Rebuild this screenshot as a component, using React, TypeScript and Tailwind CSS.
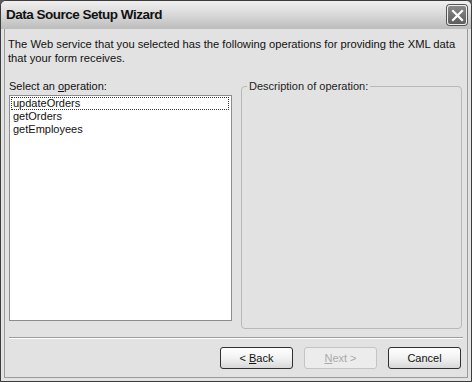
import React from "react";

const font = { fontFamily: '"Liberation Sans", Arial, sans-serif' };

function Btn({ children, disabled }: { children: React.ReactNode; disabled?: boolean }) {
  return (
    <div
      className={
        "w-[73px] h-[22px] flex items-center justify-center rounded-[3px] text-[11px] whitespace-pre " +
        (disabled
          ? "border border-[#c4c4c4] bg-[#ececec] text-[#aaaaaa]"
          : "border border-[#303030] bg-gradient-to-b from-[#ffffff] via-[#f2f2f2] to-[#d8d8d8] text-[#111]")
      }
    >
      {children}
    </div>
  );
}

export default function App() {
  return (
    <div className="w-[472px] h-[382px] bg-[#5a5a5a] p-0" style={font}>
      <div className="w-full h-full flex flex-col rounded-t-[6px] overflow-hidden bg-[#e2e2e2] border border-[#3c3c3c]">
        {/* Title bar */}
        <div className="h-[28px] shrink-0 flex items-center justify-between pl-[5px] pr-[4px] bg-gradient-to-b from-[#f0f0f0] via-[#d8d8d8] to-[#bcbcbc]">
          <span className="text-[13.5px] font-bold text-[#111] tracking-[-0.5px]">Data Source Setup Wizard</span>
          <div className="w-[20px] h-[20px] rounded-[3px] border border-[#eeeeee] bg-gradient-to-b from-[#8a8a8a] to-[#5e5e5e] flex items-center justify-center shadow-[0_0_0_1px_#555]">
            <svg width="13" height="13" viewBox="0 0 13 13">
              <path d="M2 2 L11 11 M11 2 L2 11" stroke="#ffffff" strokeWidth="2.2" strokeLinecap="square" />
            </svg>
          </div>
        </div>
        {/* Body */}
        <div className="flex-1 flex flex-col border-x-[3px] border-b-[3px] border-[#e2e2e2] shadow-[inset_1px_0_0_#9a9a9a,inset_-1px_0_0_#9a9a9a,inset_0_-1px_0_#9a9a9a]">
          <div className="px-[4px] pt-[8px] text-[11.2px] leading-[14px] text-[#111]">
            The Web service that you selected has the following operations for providing the XML data
            <br />
            that your form receives.
          </div>
          <div className="flex gap-[9px] pl-[5px] pr-[6px] mt-[15px]">
            <div className="w-[223px] flex flex-col">
              <div className="text-[11px] leading-[13px] text-[#111] mb-[2px]">
                Select an <span className="underline">o</span>peration:
              </div>
              <div className="h-[226px] bg-white border border-[#8c8c8c] px-[1px] pt-[1px] text-[11px] leading-[13px] text-[#111]">
                <div className="outline outline-1 outline-dotted outline-[#333] outline-offset-[-1px] px-[2px] h-[13px] mr-[1px]">updateOrders</div>
                <div className="px-[2px]">getOrders</div>
                <div className="px-[2px]">getEmployees</div>
              </div>
            </div>
            <div className="flex-1 relative mt-[6px] h-[243px] border border-[#b8b8b8] rounded-[4px]">
              <span className="absolute -top-[7px] left-[5px] bg-[#e2e2e2] px-[2px] text-[11px] leading-[13px] text-[#222]">
                Description of operation:
              </span>
            </div>
          </div>
          <div className="mx-[5px] mt-[8px] h-[2px] border-t border-[#9c9c9c] border-b border-b-white" />
          <div className="flex justify-end gap-[11px] pr-[7px] mt-[8px]">
            <Btn>
              {"< "}
              <span className="underline">B</span>ack
            </Btn>
            <Btn disabled>
              <span className="underline">N</span>
              {"ext >"}
            </Btn>
            <Btn>Cancel</Btn>
          </div>
        </div>
      </div>
    </div>
  );
}
